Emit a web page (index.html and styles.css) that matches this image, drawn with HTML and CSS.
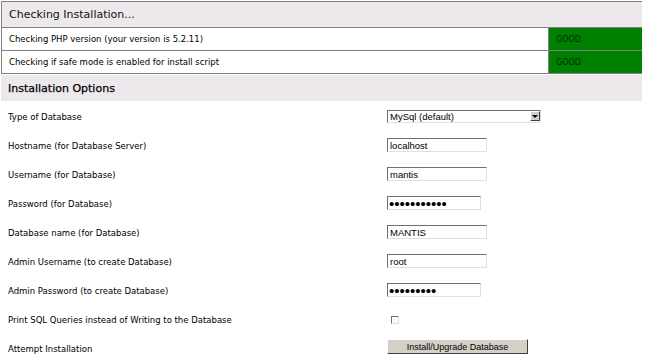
FILE: index.html
```html
<!DOCTYPE html>
<html lang="en">
<head>
  <meta charset="UTF-8" />
  <title>Mantis Administration - Installation</title>
  <link rel="stylesheet" href="styles.css">
</head>
<body>

  <!-- Pre-install checks -->
  <table class="check-table">
    <tr>
      <td class="form-title" colspan="2">Checking Installation...</td>
    </tr>
    <tr>
      <td class="check-label">Checking PHP version (your version is 5.2.11)</td>
      <td class="check-good">GOOD</td>
    </tr>
    <tr>
      <td class="check-label">Checking if safe mode is enabled for install script</td>
      <td class="check-good">GOOD</td>
    </tr>
  </table>

  <!-- Install options -->
  <form>
    <table class="options-table">
      <tr>
        <td class="form-title" colspan="2">Installation Options</td>
      </tr>
      <tr>
        <td class="opt-label">Type of Database</td>
        <td>
          <div class="fake-select">
            <span>MySql (default)</span>
            <span class="select-arrow"></span>
          </div>
        </td>
      </tr>
      <tr>
        <td class="opt-label">Hostname (for Database Server)</td>
        <td><input class="text-field" type="text" value="localhost"></td>
      </tr>
      <tr>
        <td class="opt-label">Username (for Database)</td>
        <td><input class="text-field" type="text" value="mantis"></td>
      </tr>
      <tr>
        <td class="opt-label">Password (for Database)</td>
        <td><input class="text-field pass-field" type="password" value="xxxxxxxxxxx"></td>
      </tr>
      <tr>
        <td class="opt-label">Database name (for Database)</td>
        <td><input class="text-field" type="text" value="MANTIS"></td>
      </tr>
      <tr>
        <td class="opt-label">Admin Username (to create Database)</td>
        <td><input class="text-field" type="text" value="root"></td>
      </tr>
      <tr>
        <td class="opt-label">Admin Password (to create Database)</td>
        <td><input class="text-field pass-field" type="password" value="xxxxxxxxx"></td>
      </tr>
      <tr>
        <td class="opt-label">Print SQL Queries instead of Writing to the Database</td>
        <td><span class="check-box"></span></td>
      </tr>
      <tr>
        <td class="opt-label">Attempt Installation</td>
        <td><button type="button" class="install-btn">Install/Upgrade Database</button></td>
      </tr>
    </table>
  </form>

</body>
</html>
```

FILE: styles.css
```css
body {
  margin: 1px 3px 0 1px;
  background-color: #ffffff;
  font-family: 'DejaVu Sans', Verdana, sans-serif;
  font-size: 8.5px;
  color: #000000;
}

table {
  width: 642px;
  border-collapse: collapse;
}

td {
  padding: 0;
}

.form-title {
  background-color: #ede8ec;
  font-size: 11px;
  padding: 0 7px;
  color: #111111;
}

.check-table td {
  border: 1px solid #808080;
}

.check-table .form-title {
  height: 25px;
}

.check-label {
  height: 22px;
  padding: 0 7px;
}

.check-good {
  width: 79px;
  background-color: #008000;
  color: #002800;
  font-size: 8px;
  padding: 0 7px;
}

.options-table {
  margin-top: 1px;
}

.options-table .form-title {
  height: 25px;
  color: #000000;
  -webkit-text-stroke: 0.25px #000000;
}

.options-table td {
  height: 28px;
  padding-top: 1px;
}

.options-table .opt-label {
  width: 372px;
  padding: 3px 7px 0;
  height: 26px;
}

.fake-select {
  width: 150px;
  height: 11px;
  border: 1px solid;
  border-color: #707070 #e0e0e0 #e0e0e0 #707070;
  display: flex;
  align-items: center;
  justify-content: space-between;
  font-family: 'Liberation Sans', Arial, sans-serif;
  font-size: 9.5px;
  padding-left: 2px;
  box-sizing: content-box;
}

.select-arrow {
  width: 10px;
  height: 10px;
  background-color: #d4d0c8;
  border: 1px solid;
  border-color: #ffffff #404040 #404040 #ffffff;
  box-sizing: border-box;
  position: relative;
}

.select-arrow::after {
  content: '';
  position: absolute;
  left: 1px;
  top: 3px;
  border-left: 3px solid transparent;
  border-right: 3px solid transparent;
  border-top: 3px solid #000000;
}

.text-field {
  width: 100px;
  height: 14px;
  margin: 0;
  padding: 0 0 0 2px;
  border: 1px solid;
  border-color: #707070 #e0e0e0 #e0e0e0 #707070;
  font-family: 'Liberation Sans', Arial, sans-serif;
  font-size: 9.5px;
  color: #000000;
  box-sizing: border-box;
  vertical-align: middle;
}

.pass-field {
  width: 94px;
  font-size: 15px;
  line-height: 12px;
  padding-left: 1px;
}

.check-box {
  display: inline-block;
  width: 6px;
  height: 6px;
  margin-left: 4px;
  border: 1px solid;
  border-color: #707070 #e0e0e0 #e0e0e0 #707070;
  vertical-align: middle;
}

.install-btn {
  width: 141px;
  height: 15px;
  margin: 0 0 3px;
  padding: 0;
  background-color: #d4d0c8;
  border: 1px solid;
  border-color: #ffffff #404040 #404040 #ffffff;
  font-family: 'Liberation Sans', Arial, sans-serif;
  font-size: 9px;
  color: #000000;
  vertical-align: middle;
}
```
